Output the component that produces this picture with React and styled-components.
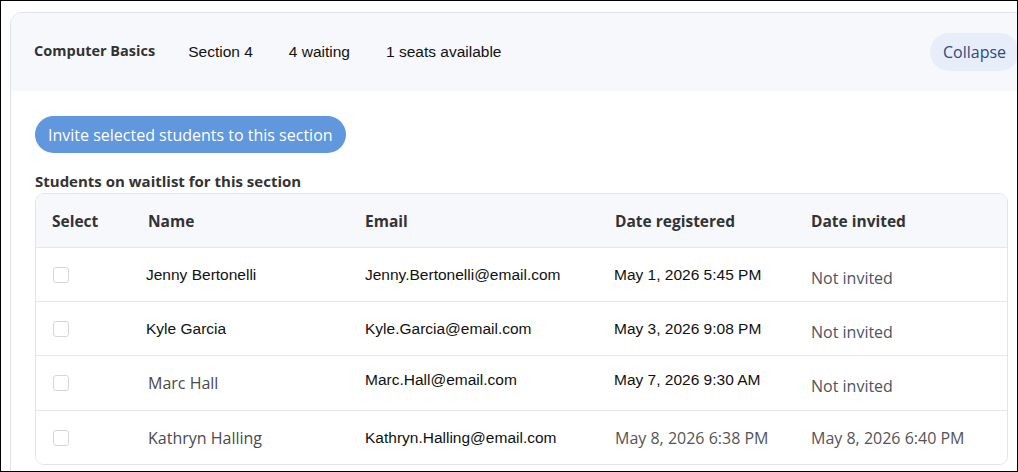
import React from 'react';
import styled, { createGlobalStyle } from 'styled-components';

const Global = createGlobalStyle`
  html, body { margin: 0; padding: 0; background: #fff; }
  body { font-family: "Open Sans", sans-serif; }
`;

const Frame = styled.div`
  width: 1018px;
  height: 472px;
  box-sizing: border-box;
  border: 1px solid #000;
  overflow: hidden;
  padding: 11px 0 0 9px;
`;

const Card = styled.div`
  width: 1020px;
  height: 480px;
  border: 1px solid #dfe2e8;
  border-radius: 12px;
  overflow: hidden;
  box-sizing: border-box;
`;

const Header = styled.div`
  display: flex;
  align-items: center;
  height: 78px;
  background: #f7f8fc;
  padding: 0 10px 0 23px;
  box-sizing: border-box;
`;

const Title = styled.div`
  font-weight: 700;
  font-size: 14.5px;
  color: #333;
  margin-right: 33px;
  margin-top: -3px;
`;

const Meta = styled.div`
  font-family: "Liberation Sans", Arial, sans-serif;
  font-size: 15.5px;
  color: #111;
  margin-right: 36px;
`;

const Collapse = styled.button`
  margin-left: auto;
  margin-right: 0;
  width: 89px;
  height: 38px;
  border: none;
  border-radius: 19px;
  background: #e8eef9;
  color: #2c4a7e;
  font-family: "Open Sans", sans-serif;
  font-size: 16px;
`;

const Body = styled.div`
  padding: 25px 0 0 24px;
  width: 973px;
`;

const Invite = styled.button`
  height: 37px;
  padding: 0 13px;
  border: none;
  border-radius: 19px;
  background: #6097dd;
  color: #fff;
  font-family: "Open Sans", sans-serif;
  font-size: 16px;
`;

const Label = styled.div`
  font-weight: 700;
  font-size: 15px;
  color: #333;
  margin: 18px 0 2px;
`;

const Table = styled.div`
  border: 1px solid #e1e4ea;
  border-radius: 9px;
  overflow: hidden;
`;

const Row = styled.div`
  display: grid;
  grid-template-columns: 112px 217px 250px 196px 1fr;
  align-items: center;
  height: ${p => p.$h}px;
  background: ${p => (p.$head ? '#f7f8fc' : '#fff')};
  border-top: ${p => (p.$head ? 'none' : '1px solid #e4e7ec')};
  box-sizing: border-box;
`;

const Th = styled.div`
  font-weight: 700;
  font-size: 15.5px;
  color: #333;
  padding-left: ${p => (p.$first ? 16 : 0)}px;
`;

const Td = styled.div`
  font-family: ${p => (p.$open ? '"Open Sans", sans-serif' : '"Liberation Sans", Arial, sans-serif')};
  font-size: ${p => (p.$open ? 16 : 15.5)}px;
  color: ${p => p.$c || '#111'};
  transform: translate(${p => p.$dx || 0}px, ${p => p.$dy || 0}px);
`;

const Check = styled.span`
  display: block;
  width: 14px;
  height: 14px;
  margin-left: 17px;
  border: 1px solid #d3d7dd;
  border-radius: 3px;
`;

const rows = [
  { name: 'Jenny Bertonelli', email: 'Jenny.Bertonelli@email.com', reg: 'May 1, 2026 5:45 PM', inv: 'Not invited', h: 54, openName: false, openReg: false },
  { name: 'Kyle Garcia', email: 'Kyle.Garcia@email.com', reg: 'May 3, 2026 9:08 PM', inv: 'Not invited', h: 54, openName: false, openReg: false },
  { name: 'Marc Hall', email: 'Marc.Hall@email.com', reg: 'May 7, 2026 9:30 AM', inv: 'Not invited', h: 55, openName: true, openReg: false, dy: -3 },
  { name: 'Kathryn Halling', email: 'Kathryn.Halling@email.com', reg: 'May 8, 2026 6:38 PM', inv: 'May 8, 2026 6:40 PM', h: 54, openName: true, openReg: true },
];

export default function App() {
  return (
    <>
      <Global />
      <Frame>
        <Card>
          <Header>
            <Title>Computer Basics</Title>
            <Meta>Section 4</Meta>
            <Meta>4 waiting</Meta>
            <Meta>1 seats available</Meta>
            <Collapse>Collapse</Collapse>
          </Header>
          <Body>
            <Invite>Invite selected students to this section</Invite>
            <Label>Students on waitlist for this section</Label>
            <Table>
              <Row $head $h={53}>
                <Th $first>Select</Th>
                <Th>Name</Th>
                <Th>Email</Th>
                <Th>Date registered</Th>
                <Th>Date invited</Th>
              </Row>
              {rows.map(r => (
                <Row key={r.email} $h={r.h}>
                  <Check />
                  <Td $open={r.openName} $c={r.openName ? '#4a4a4a' : '#111'} $dx={r.openName ? 0 : -2}>{r.name}</Td>
                  <Td $dy={r.dy}>{r.email}</Td>
                  <Td $open={r.openReg} $c={r.openReg ? '#555' : '#111'} $dx={r.openReg ? 0 : -1} $dy={r.dy}>{r.reg}</Td>
                  <Td $open $c={r.openReg ? '#555' : '#4a5560'} $dy={r.openReg ? 0 : 3}>{r.inv}</Td>
                </Row>
              ))}
            </Table>
          </Body>
        </Card>
      </Frame>
    </>
  );
}
